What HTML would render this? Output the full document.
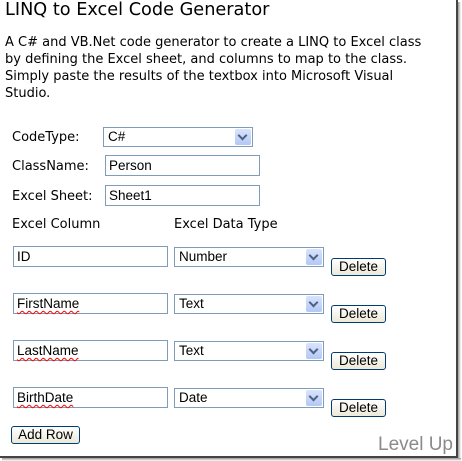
<!DOCTYPE html>
<html><head><style>
*{margin:0;padding:0;box-sizing:border-box}
body{width:462px;height:461px;background:#fff;position:relative;overflow:hidden;font-family:"DejaVu Sans","Liberation Sans",sans-serif;color:#000}
.a{position:absolute;white-space:nowrap}
.t{font-size:13px}
.in{position:absolute;border:1px solid #7f9db9;background:#fff;font-family:"Liberation Sans",sans-serif;font-size:13.5px;padding:2px 0 0 3px;height:21px}
.sel{position:absolute;border:1px solid #7f9db9;background:#fff;font-family:"Liberation Sans",sans-serif;font-size:13.5px;padding:1px 0 0 4px;height:20px}
.sel i{position:absolute;right:1px;top:1px;width:16px;height:16px;background:linear-gradient(#d8e4fb,#b3c8f5);border-radius:2px}
.sel i:after{content:"";position:absolute;left:4px;top:3px;width:5px;height:5px;border-right:2px solid #4d6185;border-bottom:2px solid #4d6185;transform:rotate(45deg)}
.btn{position:absolute;border:1px solid #003c74;border-radius:3px;background:linear-gradient(#fff,#ece9d8);font-family:"Liberation Sans",sans-serif;font-size:13.5px;text-align:center;height:18px;line-height:16px}
.sq{text-decoration:underline wavy red;text-decoration-thickness:1px;text-underline-offset:2px}
</style></head><body>
<div class="a" style="left:5px;top:0px;font-size:17.7px">LINQ to Excel Code Generator</div>
<div class="a t" style="left:5px;top:34px;line-height:17px">A C# and VB.Net code generator to create a LINQ to Excel class<br>by defining the Excel sheet, and columns to map to the class.<br>Simply paste the results of the textbox into Microsoft Visual<br>Studio.</div>
<div class="a t" style="left:12px;top:130px">CodeType:</div>
<div class="sel" style="left:103px;top:127px;width:150px">C#<i></i></div>
<div class="a t" style="left:12px;top:159px">ClassName:</div>
<div class="in" style="left:105px;top:155px;width:155px">Person</div>
<div class="a t" style="left:12px;top:189px">Excel Sheet:</div>
<div class="in" style="left:105px;top:185px;width:155px">Sheet1</div>
<div class="a t" style="left:12px;top:217px">Excel Column</div>
<div class="a t" style="left:174px;top:217px">Excel Data Type</div>

<div class="in" style="left:13px;top:246px;width:155px">ID</div>
<div class="sel" style="left:174px;top:247px;width:150px">Number<i></i></div>
<div class="btn" style="left:331px;top:258px;width:55px">Delete</div>

<div class="in" style="left:13px;top:293px;width:155px"><span class="sq">FirstName</span></div>
<div class="sel" style="left:174px;top:294px;width:150px">Text<i></i></div>
<div class="btn" style="left:331px;top:305px;width:55px">Delete</div>

<div class="in" style="left:13px;top:340px;width:155px"><span class="sq">LastName</span></div>
<div class="sel" style="left:174px;top:341px;width:150px">Text<i></i></div>
<div class="btn" style="left:331px;top:352px;width:55px">Delete</div>

<div class="in" style="left:13px;top:387px;width:155px"><span class="sq">BirthDate</span></div>
<div class="sel" style="left:174px;top:388px;width:150px">Date<i></i></div>
<div class="btn" style="left:331px;top:399px;width:55px">Delete</div>

<div class="btn" style="left:11px;top:426px;width:69px">Add Row</div>
<div class="a" style="left:378px;top:434px;font-family:'Liberation Sans',sans-serif;font-size:19px;color:#8a8a8a">Level Up</div>
<div class="a" style="left:456px;top:0;width:2px;height:458px;background:#444"></div>
<div class="a" style="left:458px;top:2px;width:3px;height:458px;background:linear-gradient(90deg,#999,#fff)"></div>
<div class="a" style="left:0;top:456px;width:458px;height:2px;background:#444"></div>
<div class="a" style="left:2px;top:458px;width:459px;height:3px;background:linear-gradient(#999,#fff)"></div>
</body></html>
